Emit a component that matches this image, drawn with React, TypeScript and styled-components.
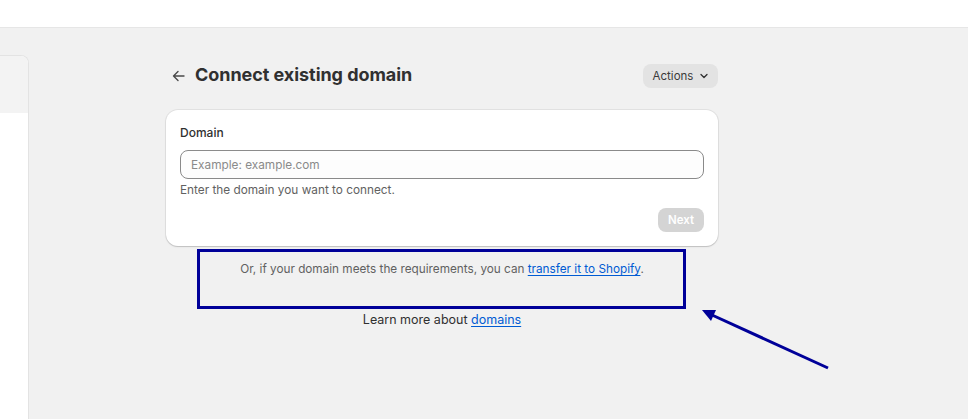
import React from "react";
import styled, { createGlobalStyle } from "styled-components";

const Global = createGlobalStyle`
  html, body { margin: 0; padding: 0; }
  body {
    background: #f1f1f1;
    font-family: Inter, "Noto Sans", "Liberation Sans", sans-serif;
    color: #303030;
    width: 968px;
    height: 419px;
    overflow: hidden;
  }
`;

const Page = styled.div`
  position: relative;
  width: 968px;
  height: 419px;
  display: flex;
  flex-direction: column;
`;

const TopBar = styled.div`
  height: 27px;
  background: #ffffff;
  border-bottom: 1px solid #e6e6e6;
  flex-shrink: 0;
`;

const Body = styled.div`
  flex: 1;
  display: flex;
  align-items: stretch;
`;

const SidePanel = styled.div`
  width: 28px;
  margin-top: 27px;
  background: #ffffff;
  border: 1px solid #e3e3e3;
  border-left: none;
  border-bottom: none;
  border-radius: 0 8px 0 0;
  display: flex;
  flex-direction: column;
  overflow: hidden;
  flex-shrink: 0;
`;

const SideHeader = styled.div`
  height: 57px;
  background: #f3f3f3;
`;

const Main = styled.div`
  margin-left: 137px;
  width: 552px;
  padding-top: 36px;
  display: flex;
  flex-direction: column;
`;

const TitleRow = styled.div`
  height: 24px;
  display: flex;
  align-items: center;
  justify-content: space-between;
`;

const TitleGroup = styled.div`
  display: flex;
  align-items: center;
  gap: 10px;
  padding-left: 6px;
`;

const BackButton = styled.span`
  display: flex;
  align-items: center;
  color: #4a4a4a;
`;

const Title = styled.h1`
  margin: 0;
  font-size: 18px;
  font-weight: 700;
  color: #303030;
  letter-spacing: -0.05px;
  line-height: 24px;
  transform: translateY(-1px);
`;

const ActionsButton = styled.button`
  height: 24px;
  width: 75px;
  padding: 0 0 0 2px;
  border: none;
  border-radius: 8px;
  background: #e3e3e3;
  color: #3a3a3a;
  font-family: inherit;
  font-size: 11.5px;
  font-weight: 400;
  display: flex;
  align-items: center;
  justify-content: center;
  gap: 5px;
`;

const Card = styled.div`
  margin-top: 22px;
  background: #ffffff;
  border-radius: 12px;
  box-shadow: 0 1px 0 0 rgba(26, 26, 26, 0.07), 0 0 0 1px rgba(0, 0, 0, 0.06), 0 1px 2px rgba(0, 0, 0, 0.1);
  padding: 13px 14px 14px;
  display: flex;
  flex-direction: column;
`;

const Label = styled.label`
  font-size: 12px;
  line-height: 20px;
  font-weight: 500;
  color: #303030;
`;

const Input = styled.input`
  margin-top: 7px;
  height: 29px;
  box-sizing: border-box;
  border: 1px solid #8a8a8a;
  border-radius: 8px;
  padding: 0 10px;
  font-family: inherit;
  font-size: 11.8px;
  background: #fdfdfd;
  color: #303030;
  &::placeholder { color: #8a8a8a; }
  outline: none;
`;

const Help = styled.div`
  margin-top: 1px;
  font-size: 11.8px;
  line-height: 20px;
  color: #616161;
`;

const Footer = styled.div`
  margin-top: 8px;
  display: flex;
  justify-content: flex-end;
`;

const NextButton = styled.button`
  height: 24px;
  width: 46px;
  border: none;
  border-radius: 8px;
  background: #d4d4d4;
  color: #ffffff;
  font-family: inherit;
  font-size: 11.5px;
  font-weight: 600;
`;

const Note = styled.p<{ $gap: number; $tone: string; $size: number }>`
  margin: ${(p) => p.$gap}px 0 0;
  text-align: center;
  font-size: ${(p) => p.$size}px;
  line-height: 20px;
  color: ${(p) => p.$tone};
`;

const Link = styled.a`
  color: #005bd3;
  text-decoration: underline;
  text-underline-offset: 2px;
`;

const Annotation = styled.svg`
  position: absolute;
  left: 0;
  top: 0;
  pointer-events: none;
`;

export default function App() {
  return (
    <>
      <Global />
      <Page>
        <TopBar />
        <Body>
          <SidePanel>
            <SideHeader />
          </SidePanel>
          <Main>
            <TitleRow>
              <TitleGroup>
                <BackButton>
                  <svg width="13" height="12" viewBox="0 0 13 12" fill="none">
                    <path d="M12 6H1.5M1.5 6L6 1.5M1.5 6L6 10.5" stroke="#4a4a4a" strokeWidth="1.4" strokeLinecap="round" strokeLinejoin="round" />
                  </svg>
                </BackButton>
                <Title>Connect existing domain</Title>
              </TitleGroup>
              <ActionsButton>
                Actions
                <svg width="12" height="12" viewBox="0 0 12 12" fill="none">
                  <path d="M3 4.5L6 7.5L9 4.5" stroke="#303030" strokeWidth="1.3" strokeLinecap="round" strokeLinejoin="round" />
                </svg>
              </ActionsButton>
            </TitleRow>
            <Card>
              <Label>Domain</Label>
              <Input placeholder="Example: example.com" />
              <Help>Enter the domain you want to connect.</Help>
              <Footer>
                <NextButton>Next</NextButton>
              </Footer>
            </Card>
            <Note $gap={13} $tone="#616161" $size={11.75}>
              Or, if your domain meets the requirements, you can <Link href="#">transfer it to Shopify</Link>.
            </Note>
            <Note $gap={31} $tone="#303030" $size={12.5}>
              Learn more about <Link href="#">domains</Link>
            </Note>
          </Main>
        </Body>
        <Annotation width="968" height="419" viewBox="0 0 968 419">
          <rect x="198.5" y="250.5" width="486" height="57" fill="none" stroke="#000099" strokeWidth="3" />
          <line x1="828" y1="368" x2="712" y2="315" stroke="#000099" strokeWidth="3" />
          <polygon points="702,310 716,310 711,321" fill="#000099" />
        </Annotation>
      </Page>
    </>
  );
}
